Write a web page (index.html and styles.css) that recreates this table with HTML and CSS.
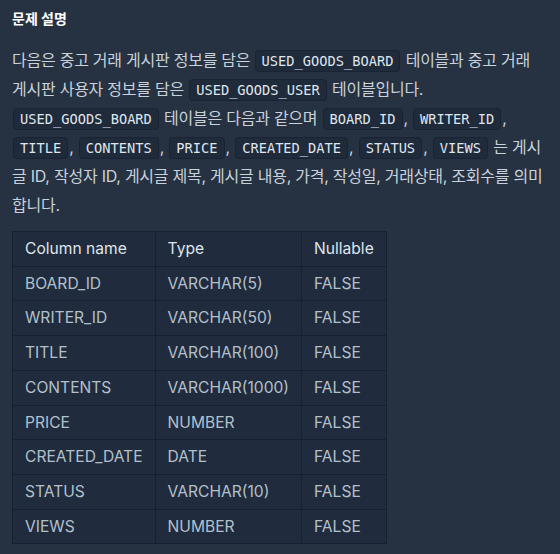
FILE: index.html
```html
<!DOCTYPE html>
<html lang="ko">
<head>
<meta charset="utf-8">
<link rel="stylesheet" href="styles.css">
</head>
<body>
<div class="page">
  <h5 class="title">문제 설명</h5>
  <p class="desc">다음은 중고 거래 게시판 정보를 담은 <code>USED_GOODS_BOARD</code> 테이블과 중고 거래 게시판 사용자 정보를 담은 <code>USED_GOODS_USER</code> 테이블입니다. <code>USED_GOODS_BOARD</code> 테이블은 다음과 같으며 <code>BOARD_ID</code>, <code>WRITER_ID</code>, <code>TITLE</code>, <code>CONTENTS</code>, <code>PRICE</code>, <code>CREATED_DATE</code>, <code>STATUS</code>, <code>VIEWS</code> 는 게시글 ID, 작성자 ID, 게시글 제목, 게시글 내용, 가격, 작성일, 거래상태, 조회수를 의미합니다.</p>
  <table class="schema">
    <thead>
      <tr><th>Column name</th><th>Type</th><th>Nullable</th></tr>
    </thead>
    <tbody>
      <tr><td>BOARD_ID</td><td>VARCHAR(5)</td><td>FALSE</td></tr>
      <tr><td>WRITER_ID</td><td>VARCHAR(50)</td><td>FALSE</td></tr>
      <tr><td>TITLE</td><td>VARCHAR(100)</td><td>FALSE</td></tr>
      <tr><td>CONTENTS</td><td>VARCHAR(1000)</td><td>FALSE</td></tr>
      <tr><td>PRICE</td><td>NUMBER</td><td>FALSE</td></tr>
      <tr><td>CREATED_DATE</td><td>DATE</td><td>FALSE</td></tr>
      <tr><td>STATUS</td><td>VARCHAR(10)</td><td>FALSE</td></tr>
      <tr><td>VIEWS</td><td>NUMBER</td><td>FALSE</td></tr>
    </tbody>
  </table>
</div>
</body>
</html>
```

FILE: styles.css
```css
html, body {
  margin: 0;
  padding: 0;
  background: #263242;
}
body {
  font-family: Inter, "Noto Sans CJK KR", sans-serif;
  color: #c9d1da;
}
.page {
  padding: 10px 12px 0 12px;
}
.title {
  margin: 0;
  font-size: 14px;
  font-weight: 700;
  line-height: 18px;
  color: #ffffff;
}
.desc {
  margin: 18px 0 0 0;
  font-size: 16px;
  line-height: 29px;
  letter-spacing: -0.25px;
  color: #c9d1da;
}
.desc code {
  font-family: "DejaVu Sans Mono", monospace;
  font-size: 13.7px;
  line-height: 1;
  letter-spacing: 0;
  color: #dfe5ec;
  background: #1f2a3b;
  border: 1px solid #1a2333;
  border-radius: 4px;
  padding: 2px 6px;
  margin: 0 1px;
}
.desc code:first-child {
  margin-left: 0;
}
.schema {
  margin-top: 11px;
  border-collapse: collapse;
  background: #202b3d;
  font-size: 15.6px;
  color: #b2c0cc;
}
.schema th,
.schema td {
  border: 1px solid #172030;
  padding: 7px 12px;
  line-height: 19.7px;
  text-align: left;
  font-weight: 400;
  white-space: nowrap;
}
.schema th {
  color: #dfe5ea;
}
```
